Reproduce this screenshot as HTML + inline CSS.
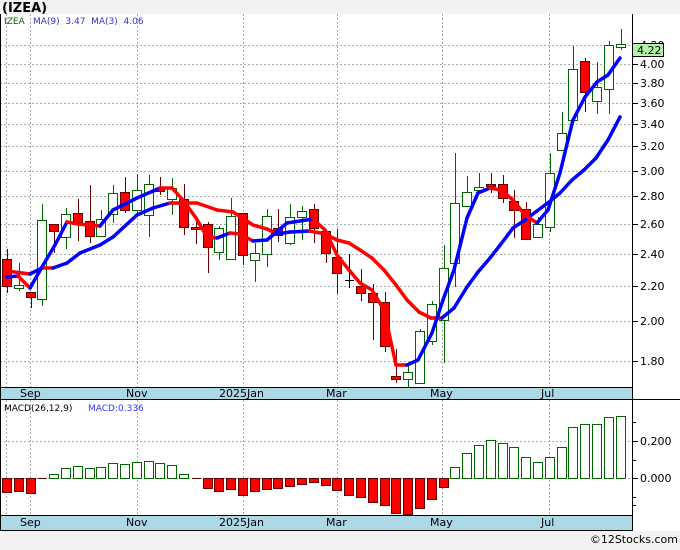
<!DOCTYPE html>
<html><head><meta charset="utf-8"><style>
html,body{margin:0;padding:0;background:#f2f2f2;}
body{width:680px;height:546px;overflow:hidden;font-family:"DejaVu Sans","Liberation Sans",sans-serif;}
svg text{font-family:"DejaVu Sans","Liberation Sans",sans-serif;}
</style></head><body>
<svg id="s" width="680" height="546" xmlns="http://www.w3.org/2000/svg">
<rect x="0" y="0" width="680" height="546" fill="#f2f2f2"/>
<text x="2" y="12" font-size="13" font-weight="bold" fill="#000">(IZEA)</text>
<rect x="0" y="14" width="680" height="517" fill="#fff"/>
<g id="g"></g>
</svg>
<script>
var g=document.getElementById('g'),h='';
function L(x1,y1,x2,y2,c,w,d){h+='<line x1="'+x1+'" y1="'+y1+'" x2="'+x2+'" y2="'+y2+'" stroke="'+c+'" stroke-width="'+(w||1)+'"'+(d?' stroke-dasharray="'+d+'"':'')+'/>';}
function R(x,y,w,hh,f,s){h+='<rect x="'+x+'" y="'+y+'" width="'+w+'" height="'+hh+'" fill="'+f+'"'+(s?' stroke="'+s+'"':'')+'/>';}
function T(x,y,t,c,sz,a){h+='<text x="'+x+'" y="'+y+'" font-size="'+(sz||11)+'" fill="'+c+'"'+(a?' text-anchor="'+a+'"':'')+'>'+t+'</text>';}
var vx=[6,30,137,243,337,442,549];
var py=[[45,'4.20'],[64,'4.00'],[83,'3.80'],[103,'3.60'],[124,'3.40'],[146,'3.20'],[171,'3.00'],[196,'2.80'],[224,'2.60'],[254,'2.40'],[286,'2.20'],[321,'2.00'],[361,'1.80']];
vx.forEach(function(x){L(x+.5,14,x+.5,387,'#aaa',1,'2,2');L(x+.5,400,x+.5,515,'#aaa',1,'2,2');});
py.forEach(function(p){L(0,p[0]+.5,632,p[0]+.5,'#aaa',1,'2,2');L(632,p[0]+.5,638,p[0]+.5,'#000');T(640,p[0]+4,p[1],'#000',11);});
[441,478].forEach(function(y){L(0,y+.5,632,y+.5,'#aaa',1,'2,2');L(632,y+.5,638,y+.5,'#000');});
T(640,445,'0.200','#000',11);T(640,482,'0.000','#000',11);
[422,460,497,505].forEach(function(y){L(632,y+.5,636,y+.5,'#000');});
// candles [o? up, bodyTop,bodyBot,wTop,wBot, color]
var C=[[259,286,249,293,'r'],[285,288,263,291,'g'],[292,297,292,308,'r'],[220,299,204,306,'g'],[224,231,224,253,'r'],[214,237,208,249,'g'],[213,222,199,241,'r'],[221,236,185,243,'r'],[219,236,210,237,'g'],[193,214,185,223,'g'],[192,210,177,213,'r'],[190,210,174,213,'g'],[184,215,175,237,'g'],[188,191,177,195,'r'],[188,199,178,215,'g'],[199,227,184,235,'r'],[227,229,222,244,'r'],[224,247,222,273,'r'],[228,252,226,260,'g'],[216,259,198,260,'g'],[213,255,213,265,'r'],[253,260,243,282,'g'],[216,254,209,267,'g'],[228,235,209,242,'r'],[217,243,204,245,'g'],[211,217,206,240,'g'],[209,228,204,243,'r'],[231,253,230,263,'r'],[257,273,229,294,'r'],[280,280,254,288,'k'],[286,293,269,301,'r'],[293,302,284,340,'r'],[302,346,292,352,'r'],[376,379,349,383,'r'],[372,379,363,388,'g'],[331,383,329,383,'g'],[304,341,301,345,'g'],[268,320,245,363,'g'],[203,263,153,287,'g'],[192,206,176,207,'g'],[187,190,173,193,'g'],[184,185,173,193,'r'],[184,198,175,203,'r'],[201,210,190,238,'r'],[209,239,202,239,'r'],[224,237,217,238,'g'],[173,227,153,232,'g'],[133,150,112,150,'g'],[69,120,46,123,'g'],[61,92,58,112,'r'],[87,101,62,114,'g'],[45,89,41,114,'g'],[44,47,29,50,'g']];
function cx(i){return Math.round(7+11.8*i);}
C.forEach(function(c,i){var x=cx(i);var wc=c[4]=='g'?'#060':(c[4]=='r'?'#600':'#000');
L(x+.5,c[2],x+.5,c[3],wc);
var bh=Math.max(c[1]-c[0],2);
if(c[4]=='g')R(x-4.5,c[0]+.5,9,bh,'#fff','#060');else if(c[4]=='r')R(x-4.5,c[0]+.5,9,bh,'#f00','#600');else L(x-4,c[0]+.5,x+5,c[0]+.5,'#000');});
function line(pts){for(var i=1;i<pts.length;i++){var a=pts[i-1],b=pts[i];var c=b[1]<a[1]-0.5?'#00f':'#f00';h+='<line x1="'+a[0]+'" y1="'+a[1]+'" x2="'+b[0]+'" y2="'+b[1]+'" stroke="'+c+'" stroke-width="3.5" stroke-linecap="round"/>';}}
line([[7,271],[30,274],[42,268],[53,268],[67,263],[80,253],[100,245],[113,237],[137,215],[153,208],[170,203],[183,203],[197,203],[217,210],[233,212],[253,225],[267,229],[277,234],[290,232],[310,231],[325,234],[337,240],[349,243],[360,250],[372,258],[384,270],[396,285],[407,300],[419,312],[431,318],[442,318],[454,308],[467,287],[478,272],[490,258],[501,244],[513,228],[525,220],[537,211],[549,202],[560,193],[572,180],[584,170],[596,158],[608,140],[620,117]]);
line([[7,277],[18,276],[30,288],[42,267],[55,245],[67,222],[78,224],[100,226],[113,210],[137,198],[160,188],[172,188],[183,200],[196,218],[207,237],[217,238],[230,233],[240,234],[253,241],[267,240],[287,223],[313,219],[325,230],[337,255],[349,270],[360,283],[372,290],[384,310],[396,365],[407,365],[418,360],[432,333],[443,300],[454,270],[467,218],[478,193],[490,188],[501,190],[513,200],[525,215],[537,223],[548,210],[560,173],[568,140],[573,120],[585,97],[597,82],[608,75],[620,58]]);
// macd
var M=[492,491,493,479,474,468,466,468,467,463,464,462,461,463,465,474,479,488,491,489,495,491,489,488,486,484,482,485,490,495,497,502,505,513,514,508,499,487,467,453,445,440,443,447,457,462,457,447,427,424,424,417,416];
M.forEach(function(y,i){var x=cx(i);if(Math.abs(y-478)<2){L(x-4,478.5,x+5,478.5,'#600');return;}
if(y<478)R(x-4.5,y+.5,9,478-y,'#fff','#060');else R(x-4.5,478.5,9,y-478,'#f00','#600');});
// axis bars
R(0,387,632,13,'#add8e6');L(0,387.5,632,387.5,'#000');L(0,399.5,680,399.5,'#000');
R(0,515,632,15,'#add8e6');L(0,515.5,632,515.5,'#000');L(0,530.5,632,530.5,'#000');
var lb=[[20,'Sep'],[126,'Nov'],[219,'2025Jan'],[326,'Mar'],[430,'May'],[541,'Jul']];
lb.forEach(function(l){T(l[0],397,l[1],'#000',11);T(l[0],526,l[1],'#000',11);});
L(0.5,14,0.5,530,'#000');L(632.5,14,632.5,531,'#000');
R(632.5,43.5,31,13,'#b3f2a8','#000');T(637,54,'4.22','#000',11);
T(4,24,'IZEA','#060',9);T(33,24,'MA(9)&#160; 3.47&#160; MA(3)&#160; 4.06','#33c',9);
T(4,411,'MACD(26,12,9)','#000',9);T(88,411,'MACD:0.336','#33f',9);
T(678,543,'©12Stocks.com','#000',11,'end');
g.innerHTML=h;
</script>
</body></html>
